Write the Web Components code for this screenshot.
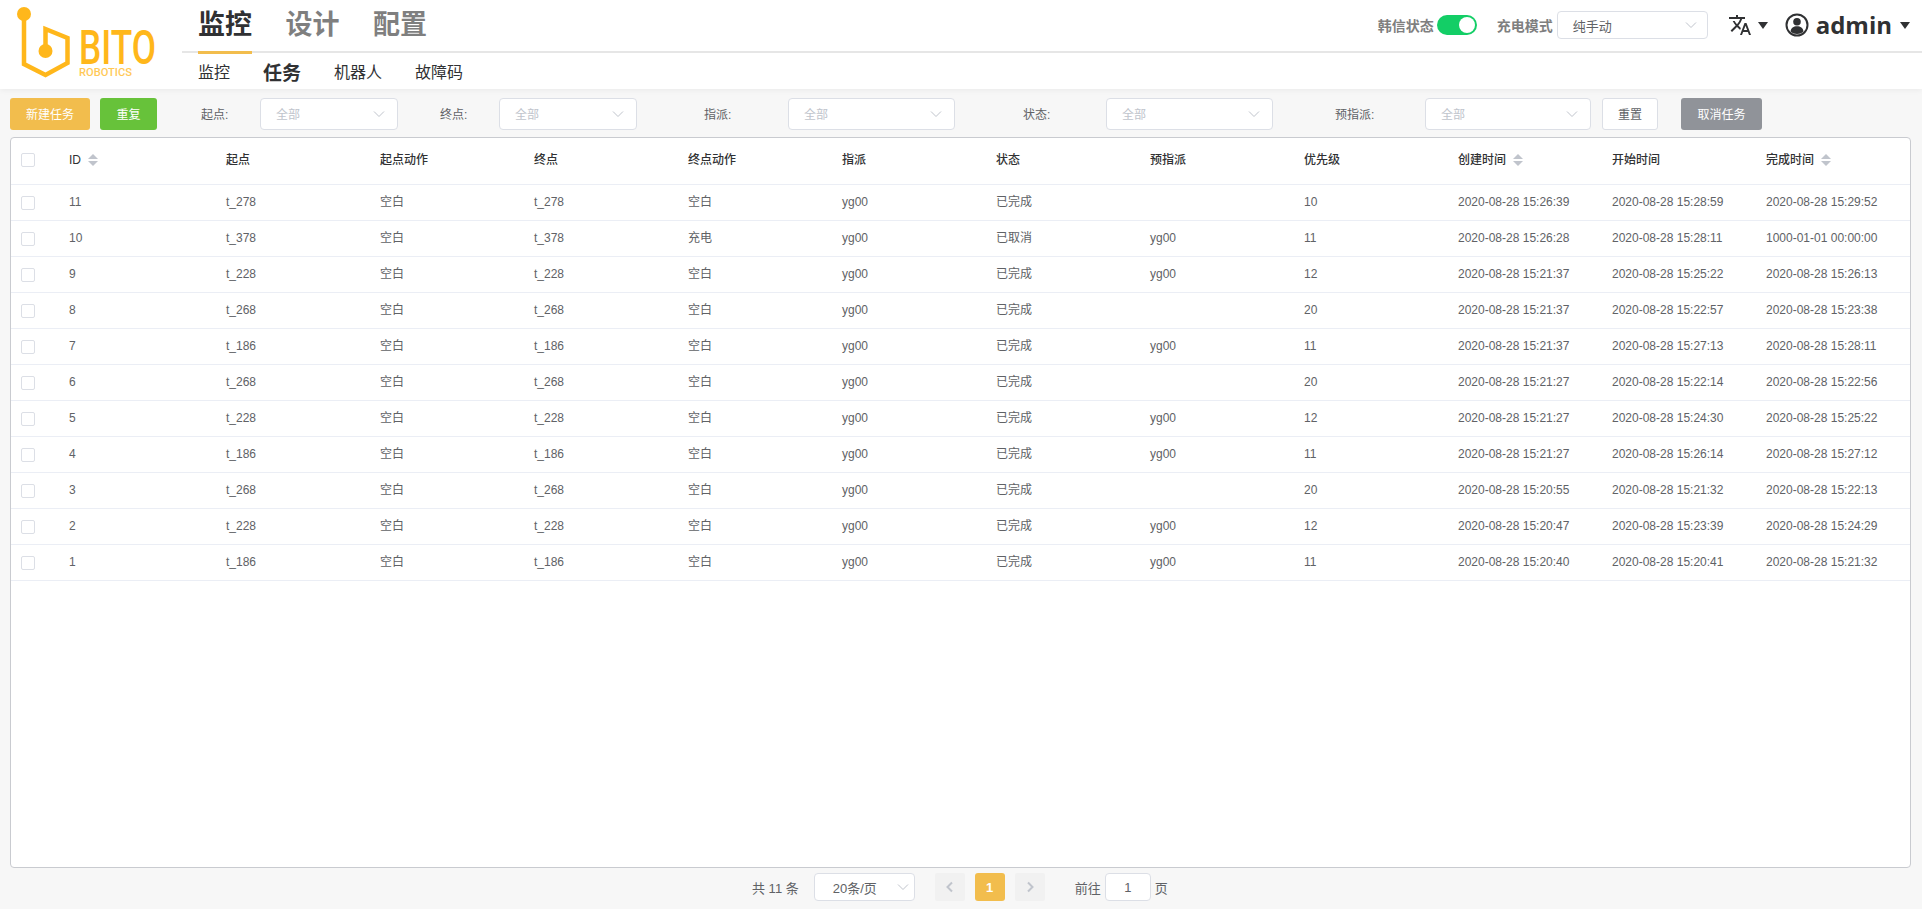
<!DOCTYPE html>
<html lang="zh">
<head>
<meta charset="utf-8">
<title>BITO Robotics</title>
<style>
html,body{margin:0;height:100%;}
body{background:#f7f7f7;font-family:"Liberation Sans","Noto Sans CJK SC",sans-serif;color:#606266;overflow:hidden;}
#app{display:flex;flex-direction:column;height:909px;width:1922px;}
</style>
</head>
<body>
<div id="app">
  <app-header></app-header>
  <task-toolbar>
    <ui-button kind="warn" w="80">新建任务</ui-button>
    <ui-button kind="ok" w="57" gap="10">重复</ui-button>
    <filter-field label="起点:" gap="44" lw="59" sw="138"></filter-field>
    <filter-field label="终点:" gap="42" lw="59" sw="138"></filter-field>
    <filter-field label="指派:" gap="67" lw="84" sw="167"></filter-field>
    <filter-field label="状态:" gap="68" lw="83" sw="167"></filter-field>
    <filter-field label="预指派:" gap="62" lw="90" sw="166"></filter-field>
    <ui-button kind="plain" w="56" gap="11">重置</ui-button>
    <ui-button kind="grey" w="81" gap="23">取消任务</ui-button>
  </task-toolbar>
  <task-table></task-table>
  <task-pager></task-pager>
</div>
<script>
const make=(name,css,html,extra={})=>{
  customElements.define(name,class extends HTMLElement{
    connectedCallback(){
      if(this.shadowRoot)return;
      const r=this.attachShadow({mode:'open'});
      const h=typeof html==='function'?html(this):html;
      r.innerHTML=`<style>${css}</style>${h}`;
      if(extra.init)extra.init(this,r);
    }
  });
};
const chevron=`<svg width="14" height="14" viewBox="0 0 14 14" fill="none" stroke="#c0c4cc" stroke-width="1"><path d="M2 4.5 7 9.5 12 4.5"/></svg>`;

make('brand-logo',`:host{display:block;width:182px;height:89px;flex:none}svg{display:block;overflow:visible}
 text{font-family:"Roboto","Liberation Sans",sans-serif;fill:#ffb71b}`,
`<svg width="182" height="89" viewBox="0 0 182 89">
  <g fill="none" stroke="#ffb71b" stroke-width="4.500" stroke-linejoin="miter">
   <path d="M24 16V64L45.500 75 67.500 63V38L45.500 29V50"/>
  </g>
  <circle cx="24" cy="14" r="7" fill="#ffb71b"/>
  <circle cx="45.500" cy="51" r="7" fill="#ffb71b"/>
  <text x="79" y="63.500" font-size="49" font-weight="500" textLength="77" lengthAdjust="spacingAndGlyphs">BITO</text>
  <text x="79" y="76" font-size="11" font-weight="500" textLength="53" lengthAdjust="spacingAndGlyphs" opacity=".75">ROBOTICS</text>
 </svg>`);

make('main-nav',`:host{display:flex;flex-direction:column;flex:none;width:1740px;height:89px;box-sizing:border-box;}
 .top{box-sizing:border-box;border-bottom:2px solid #e6e6e6;display:flex;padding-left:16px;align-items:stretch;height:53px}
 .top a{font-size:27px;font-weight:700;color:#7f7f7f;margin-right:33.500px;line-height:51px;height:54px;box-sizing:border-box;}
 .top a.on{color:#303133;border-bottom:3px solid #f2bd4d;}
 .sub{display:flex;padding-left:16px;align-items:center;height:36px;}
 .sub a{font-size:16px;color:#303133;margin-right:33px;}
 .sub a.on{font-size:19px;font-weight:700;}`,
`<div class="top"><a class="on">监控</a><a>设计</a><a>配置</a></div>
 <div class="sub"><a>监控</a><a class="on">任务</a><a>机器人</a><a>故障码</a></div>`);

make('status-bar',`:host{position:absolute;right:12px;top:0;display:flex;align-items:center;height:50px;
   font-size:14px;font-weight:700;color:#7f7f7f}
 .sw{width:40px;height:20px;border-radius:10px;background:#13ce66;margin:0 20px 0 3px;position:relative;}
 .sw i{position:absolute;right:2px;top:2px;width:16px;height:16px;border-radius:50%;background:#fff;}
 .sel{width:151px;height:28px;box-sizing:border-box;border:1px solid #dcdfe6;border-radius:4px;background:#fff;margin-left:4px;
   display:flex;align-items:center;justify-content:space-between;padding:0 9px 0 15px;font-size:13px;font-weight:400;color:#606266}
 .lang{margin-left:20px;display:block}
 .caret{width:0;height:0;border:5px solid transparent;border-top:7px solid #303133;border-bottom:0;margin-left:6px;}
 .user{margin-left:17px;display:block}
 .name{font:700 24px "Open Sans",sans-serif;color:#303133;margin-left:7px;line-height:30px}
 .c2{margin-left:8px}`,
`<span>韩信状态</span><div class="sw"><i></i></div><span>充电模式</span>
 <div class="sel"><span>纯手动</span>${chevron}</div>
 <svg class="lang" width="24" height="24" viewBox="0 0 24 24" fill="#303133"><path d="M12.870 15.070l-2.540-2.510.030-.030c1.740-1.940 2.980-4.170 3.710-6.530H17V4h-7V2H8v2H1v1.990h11.170C11.500 7.920 10.440 9.750 9 11.350 8.070 10.320 7.300 9.190 6.690 8h-2c.730 1.630 1.730 3.170 2.980 4.560l-5.090 5.020L4 19l5-5 3.110 3.110.760-2.040zM18.500 10h-2L12 22h2l1.120-3h4.750L21 22h2l-4.500-12zm-2.620 7l1.620-4.330L19.120 17h-3.240z"/></svg>
 <i class="caret"></i>
 <svg class="user" width="24" height="24" viewBox="0 0 24 24"><circle cx="12" cy="12" r="10.500" fill="none" stroke="#303133" stroke-width="2"/><circle cx="12" cy="8.800" r="3.800" fill="#303133"/><path d="M5.500 18.500c.5-3.800 3-5.200 6.500-5.200s6 1.400 6.500 5.200c-1.700 1.700-3.900 2.500-6.500 2.500s-4.800-.8-6.500-2.500z" fill="#303133"/></svg>
 <span class="name">admin</span><i class="caret c2"></i>`);

make('app-header',`:host{display:flex;height:89px;flex:none;background:#fff;position:relative;box-shadow:0 1px 6px rgba(0,0,0,.06);z-index:1;}`,
`<brand-logo></brand-logo><main-nav></main-nav><status-bar></status-bar>`);

make('ui-button',`:host{display:flex;flex:none;align-items:center;justify-content:center;height:32px;box-sizing:border-box;border-radius:3px;font-size:12px;color:#fff;padding-bottom:2px}
 :host([kind=warn]){background:#f2bd4d}
 :host([kind=ok]){background:#67c23a}
 :host([kind=plain]){background:#fff;border:1px solid #dcdfe6;color:#606266}
 :host([kind=grey]){background:#909399}`,
`<slot></slot>`,{init(h){h.style.width=h.getAttribute('w')+'px';h.style.marginLeft=(h.getAttribute('gap')||0)+'px';}});

make('filter-field',`:host{display:flex;flex:none;align-items:center;height:32px;font-size:12px;color:#606266}
 .lab{padding-bottom:2px}
 .box{height:32px;box-sizing:border-box;border:1px solid #dcdfe6;border-radius:4px;background:#fff;display:flex;align-items:center;justify-content:space-between;padding:0 11px 0 15px;color:#c0c4cc}`,
h=>`<span class="lab" style="width:${h.getAttribute('lw')}px">${h.getAttribute('label')}</span>
 <div class="box" style="width:${h.getAttribute('sw')}px"><span class="lab">全部</span>${chevron}</div>`,
{init(h){h.style.marginLeft=h.getAttribute('gap')+'px';}});

make('task-toolbar',`:host{display:flex;flex:none;padding:9px 0 7px 10px;height:32px;align-items:center}`,`<slot></slot>`);

const rows=[
['11','t_278','空白','t_278','空白','yg00','已完成','','10','2020-08-28 15:26:39','2020-08-28 15:28:59','2020-08-28 15:29:52'],
['10','t_378','空白','t_378','充电','yg00','已取消','yg00','11','2020-08-28 15:26:28','2020-08-28 15:28:11','1000-01-01 00:00:00'],
['9','t_228','空白','t_228','空白','yg00','已完成','yg00','12','2020-08-28 15:21:37','2020-08-28 15:25:22','2020-08-28 15:26:13'],
['8','t_268','空白','t_268','空白','yg00','已完成','','20','2020-08-28 15:21:37','2020-08-28 15:22:57','2020-08-28 15:23:38'],
['7','t_186','空白','t_186','空白','yg00','已完成','yg00','11','2020-08-28 15:21:37','2020-08-28 15:27:13','2020-08-28 15:28:11'],
['6','t_268','空白','t_268','空白','yg00','已完成','','20','2020-08-28 15:21:27','2020-08-28 15:22:14','2020-08-28 15:22:56'],
['5','t_228','空白','t_228','空白','yg00','已完成','yg00','12','2020-08-28 15:21:27','2020-08-28 15:24:30','2020-08-28 15:25:22'],
['4','t_186','空白','t_186','空白','yg00','已完成','yg00','11','2020-08-28 15:21:27','2020-08-28 15:26:14','2020-08-28 15:27:12'],
['3','t_268','空白','t_268','空白','yg00','已完成','','20','2020-08-28 15:20:55','2020-08-28 15:21:32','2020-08-28 15:22:13'],
['2','t_228','空白','t_228','空白','yg00','已完成','yg00','12','2020-08-28 15:20:47','2020-08-28 15:23:39','2020-08-28 15:24:29'],
['1','t_186','空白','t_186','空白','yg00','已完成','yg00','11','2020-08-28 15:20:40','2020-08-28 15:20:41','2020-08-28 15:21:32'],
];
const heads=[['ID',1],['起点'],['起点动作'],['终点'],['终点动作'],['指派'],['状态'],['预指派'],['优先级'],['创建时间',1],['开始时间'],['完成时间',1]];
const sort=`<span class="sort"><i class="u"></i><i class="d"></i></span>`;
const box=`<span class="cb"></span>`;
make('task-table',`:host{display:block;flex:none;box-sizing:border-box;margin:0 11px 0 10px;width:1901px;height:731px;background:#fff;border:1px solid #c9cbd0;border-radius:4px;font-size:12px;color:#606266;overflow:hidden}
 .r{display:grid;grid-template-columns:48px 157px repeat(11,154px);align-items:center;height:36px;box-sizing:border-box;border-bottom:1px solid #ebeef5}
 .r.h{height:47px;color:#303133;font-weight:500;align-items:start;padding-top:14px}
 .c{padding:0 0 1px 10px;line-height:16px;white-space:nowrap;display:flex;align-items:center}
 .c.c0{padding:0 0 0 10px}
 .r.h .c0{padding-top:1px}
 .cb{display:block;width:14px;height:14px;box-sizing:border-box;border:1px solid #dcdfe6;border-radius:2px;background:#fff}
 .sort{display:inline-flex;flex-direction:column;gap:2px;margin-left:7px}
 .sort i{display:block;width:0;height:0;border:5px solid transparent}
 .sort .u{border-top:0;border-bottom:5px solid #c0c4cc}
 .sort .d{border-bottom:0;border-top:5px solid #c0c4cc}`,
`<div class="r h"><div class="c c0">${box}</div>${heads.map(h=>`<div class="c">${h[0]}${h[1]?sort:''}</div>`).join('')}</div>
 ${rows.map(r=>`<div class="r"><div class="c c0">${box}</div>${r.map(v=>`<div class="c">${v}</div>`).join('')}</div>`).join('')}`);

make('task-pager',`:host{display:flex;flex:none;height:41px;box-sizing:border-box;padding:5px 0 8px 752px;align-items:center;font-size:13px;color:#606266}
 .sel,.inp{height:28px;box-sizing:border-box;border:1px solid #dcdfe6;border-radius:4px;background:#fff;display:flex;align-items:center;}
 .sel{width:101px;margin-left:15px;padding:0 4px 0 18px;justify-content:space-between}
 .b{width:30px;height:28px;display:flex;align-items:center;justify-content:center;background:#f1f1f1;border-radius:2px;box-sizing:border-box}
 .p{margin-left:20px}.cur{background:#f2bd4d;color:#fff;font-weight:700;margin-left:10px;border-radius:3px}.n{margin-left:10px}
 .go{margin-left:30px}
 .inp{width:46px;margin:0 4px;justify-content:center;}`,
`<span>共 11 条</span><div class="sel"><span>20条/页</span>${chevron}</div>
 <div class="b p"><svg width="12" height="12" viewBox="0 0 12 12" fill="none" stroke="#c0c4cc" stroke-width="2"><path d="M8 1.500 3.500 6 8 10.500"/></svg></div>
 <div class="b cur">1</div>
 <div class="b n"><svg width="12" height="12" viewBox="0 0 12 12" fill="none" stroke="#c0c4cc" stroke-width="2"><path d="M4 1.500 8.500 6 4 10.500"/></svg></div>
 <span class="go">前往</span><div class="inp">1</div><span>页</span>`);
</script>
</body>
</html>
